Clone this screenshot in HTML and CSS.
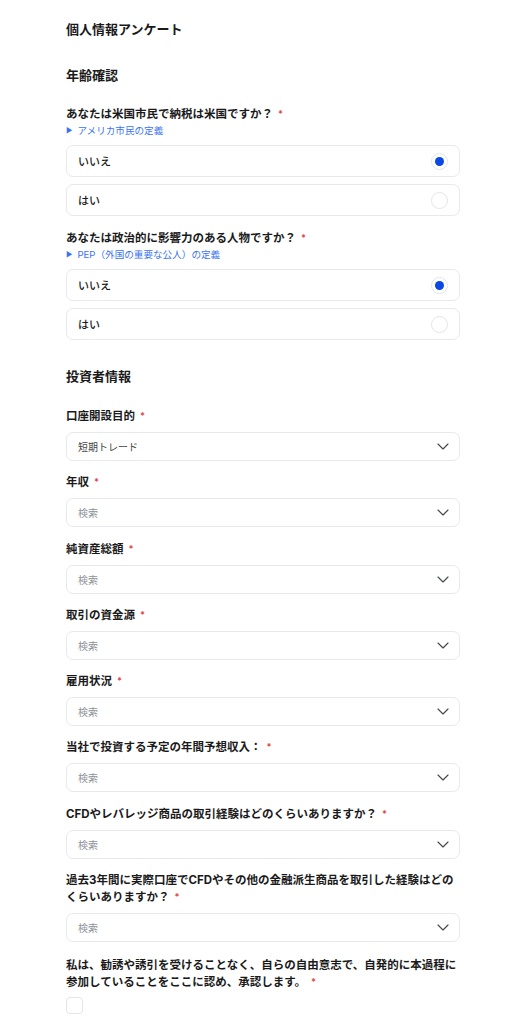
FILE: index.html
```html
<!DOCTYPE html>
<html lang="ja">
<head>
<meta charset="utf-8">
<link rel="stylesheet" href="styles.css">
</head>
<body>
<main class="form">
  <h1 class="title">個人情報アンケート</h1>

  <h2 class="section">年齢確認</h2>

  <div class="question">
    <p class="label">あなたは米国市民で納税は米国ですか？<span class="req">*</span></p>
    <a class="def"><span class="tri">▶</span>アメリカ市民の定義</a>
    <div class="options">
      <div class="option"><span>いいえ</span><span class="radio on"></span></div>
      <div class="option"><span>はい</span><span class="radio"></span></div>
    </div>
  </div>

  <div class="question">
    <p class="label">あなたは政治的に影響力のある人物ですか？<span class="req">*</span></p>
    <a class="def"><span class="tri">▶</span>PEP（外国の重要な公人）の定義</a>
    <div class="options">
      <div class="option"><span>いいえ</span><span class="radio on"></span></div>
      <div class="option"><span>はい</span><span class="radio"></span></div>
    </div>
  </div>

  <h2 class="section section2">投資者情報</h2>

  <div class="field">
    <p class="label">口座開設目的<span class="req">*</span></p>
    <div class="select"><span class="value">短期トレード</span><svg class="chev" viewBox="0 0 12 7"><path d="M1 1l5 5 5-5"/></svg></div>
  </div>
  <div class="field">
    <p class="label">年収<span class="req">*</span></p>
    <div class="select"><span class="ph">検索</span><svg class="chev" viewBox="0 0 12 7"><path d="M1 1l5 5 5-5"/></svg></div>
  </div>
  <div class="field">
    <p class="label">純資産総額<span class="req">*</span></p>
    <div class="select"><span class="ph">検索</span><svg class="chev" viewBox="0 0 12 7"><path d="M1 1l5 5 5-5"/></svg></div>
  </div>
  <div class="field">
    <p class="label">取引の資金源<span class="req">*</span></p>
    <div class="select"><span class="ph">検索</span><svg class="chev" viewBox="0 0 12 7"><path d="M1 1l5 5 5-5"/></svg></div>
  </div>
  <div class="field">
    <p class="label">雇用状況<span class="req">*</span></p>
    <div class="select"><span class="ph">検索</span><svg class="chev" viewBox="0 0 12 7"><path d="M1 1l5 5 5-5"/></svg></div>
  </div>
  <div class="field">
    <p class="label">当社で投資する予定の年間予想収入：<span class="req">*</span></p>
    <div class="select"><span class="ph">検索</span><svg class="chev" viewBox="0 0 12 7"><path d="M1 1l5 5 5-5"/></svg></div>
  </div>
  <div class="field">
    <p class="label">CFDやレバレッジ商品の取引経験はどのくらいありますか？<span class="req">*</span></p>
    <div class="select"><span class="ph">検索</span><svg class="chev" viewBox="0 0 12 7"><path d="M1 1l5 5 5-5"/></svg></div>
  </div>
  <div class="field">
    <p class="label">過去3年間に実際口座でCFDやその他の金融派生商品を取引した経験はどのくらいありますか？<span class="req">*</span></p>
    <div class="select"><span class="ph">検索</span><svg class="chev" viewBox="0 0 12 7"><path d="M1 1l5 5 5-5"/></svg></div>
  </div>
  <div class="field field-last">
    <p class="label">私は、勧誘や誘引を受けることなく、自らの自由意志で、自発的に本過程に参加していることをここに認め、承認します。<span class="req">*</span></p>
    <span class="checkbox"></span>
  </div>
</main>
</body>
</html>
```

FILE: styles.css
```css
* { box-sizing: border-box; }
html, body { margin: 0; padding: 0; background: #fff; }
body {
  font-family: Inter, "Noto Sans CJK JP", sans-serif;
  color: #1a1a1a;
}
.form {
  width: 394px;
  margin-left: 66px;
  padding-top: 19px;
}
.title {
  margin: 0;
  font-size: 13px;
  line-height: 20px;
  font-weight: 700;
}
.section {
  margin: 26px 0 0;
  font-size: 13px;
  line-height: 20px;
  font-weight: 700;
}
.section2 { margin-top: 26px; }
.question { margin-top: 21px; }
.question + .question { margin-top: 14px; }
.label {
  margin: 0;
  font-size: 11.5px;
  line-height: 17px;
  font-weight: 700;
}
.req {
  color: #e04848;
  font-size: 9px;
  line-height: 0;
  margin-left: 5px;
  vertical-align: 1px;
}
.def {
  display: flex;
  align-items: center;
  margin-top: 1px;
  font-size: 9.6px;
  line-height: 14px;
  color: #3a74f0;
}
.tri {
  font-size: 7px;
  margin-right: 5px;
}
.options {
  display: flex;
  flex-direction: column;
  gap: 7px;
  margin-top: 7px;
}
.option {
  display: flex;
  align-items: center;
  justify-content: space-between;
  height: 32px;
  padding: 0 11px 0 11px;
  border: 1px solid #e7e9ec;
  border-radius: 7px;
  font-size: 11px;
  font-weight: 500;
}
.radio {
  width: 17px;
  height: 17px;
  border: 1px solid #e3e5e8;
  border-radius: 50%;
  display: flex;
  align-items: center;
  justify-content: center;
}
.radio.on::after {
  content: "";
  width: 9px;
  height: 9px;
  border-radius: 50%;
  background: #0a48e6;
}
.field { margin-top: 13.3px; }
.section + .field { margin-top: 22px; }
.field-last { margin-top: 15px; }
.select {
  margin-top: 7px;
  height: 29px;
  display: flex;
  align-items: center;
  justify-content: space-between;
  padding: 0 10px 0 11px;
  border: 1px solid #e7e9ec;
  border-radius: 7px;
  font-size: 10px;
}
.value { color: #444; }
.ph { color: #8e9297; }
.chev {
  width: 12px;
  height: 7px;
  fill: none;
  stroke: #45484d;
  stroke-width: 1.15;
  stroke-linecap: round;
  stroke-linejoin: round;
}
.checkbox {
  display: block;
  margin-top: 6px;
  width: 17px;
  height: 17px;
  border: 1px solid #e3e5e8;
  border-radius: 4px;
}
```
